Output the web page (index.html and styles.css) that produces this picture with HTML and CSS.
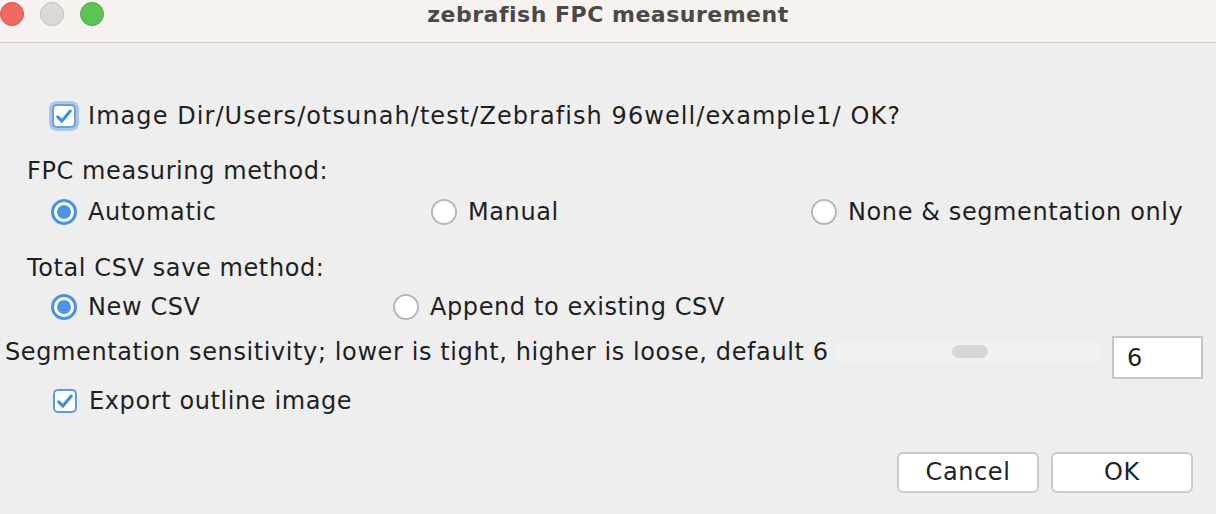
FILE: index.html
```html
<!DOCTYPE html>
<html>
<head>
<meta charset="utf-8">
<link rel="stylesheet" href="styles.css">
</head>
<body>
<div class="window">
  <div class="titlebar">
    <div class="lights">
      <span class="light red"></span>
      <span class="light gray"></span>
      <span class="light green"></span>
    </div>
    <div class="title">zebrafish FPC measurement</div>
  </div>
  <div class="content">
    <div class="row row-check1">
      <span class="checkbox focus"><svg viewBox="0 0 24 24" width="21" height="21"><path d="M4.5 12.5 L9.5 17.5 L19.5 5.5" fill="none" stroke="#3d8fe6" stroke-width="3.8" stroke-linecap="round" stroke-linejoin="round"/></svg></span>
      <span class="label wide">Image Dir/Users/otsunah/test/Zebrafish 96well/example1/ OK?</span>
    </div>
    <div class="row heading h1">FPC measuring method:</div>
    <div class="row radios fpc">
      <div class="opt"><span class="radio on"></span><span class="label">Automatic</span></div>
      <div class="opt"><span class="radio"></span><span class="label">Manual</span></div>
      <div class="opt"><span class="radio"></span><span class="label">None &amp; segmentation only</span></div>
    </div>
    <div class="row heading h2">Total CSV save method:</div>
    <div class="row radios csv">
      <div class="opt"><span class="radio on"></span><span class="label">New CSV</span></div>
      <div class="opt"><span class="radio"></span><span class="label">Append to existing CSV</span></div>
    </div>
    <div class="row seg">
      <span class="seg-label">Segmentation sensitivity; lower is tight, higher is loose, default 6</span>
      <div class="slider"><span class="knob"></span></div>
      <div class="field">6</div>
    </div>
    <div class="row row-check2">
      <span class="checkbox"><svg viewBox="0 0 24 24" width="21" height="21"><path d="M4.5 12.5 L9.5 17.5 L19.5 5.5" fill="none" stroke="#3d8fe6" stroke-width="3.8" stroke-linecap="round" stroke-linejoin="round"/></svg></span>
      <span class="label">Export outline image</span>
    </div>
    <div class="buttons">
      <div class="btn">Cancel</div>
      <div class="btn">OK</div>
    </div>
  </div>
</div>
</body>
</html>
```
FILE: styles.css
```css
html, body {
  margin: 0;
  padding: 0;
}
body {
  width: 1216px;
  height: 514px;
  overflow: hidden;
  background: #eeeeee;
  font-family: "DejaVu Sans", "Liberation Sans", sans-serif;
  color: #1f1f1f;
}
.window {
  width: 1216px;
  height: 514px;
  background: #eeeeee;
}
.titlebar {
  height: 42px;
  background: #f6f2f0;
  border-bottom: 1px solid #d2cfcd;
  position: relative;
  display: flex;
  align-items: center;
  justify-content: center;
}
.lights {
  position: absolute;
  left: 0;
  top: 2px;
  display: flex;
  gap: 16px;
}
.light {
  width: 24px;
  height: 24px;
  border-radius: 50%;
  box-sizing: border-box;
}
.red { background: #ee6a5f; border: 1px solid #d6544a; }
.gray { background: #dcd8d6; border: 1px solid #c4c0be; }
.green { background: #5cc454; border: 1px solid #4aa942; }
.title {
  font-family: "DejaVu Sans", sans-serif;
  font-weight: bold;
  font-size: 22px;
  letter-spacing: 0.5px;
  color: #4b4848;
  margin-top: -14px;
}
.content {
  position: relative;
  padding-top: 55px;
  font-size: 24px;
  letter-spacing: 0.6px;
}
.row {
  display: flex;
  align-items: center;
  height: 36px;
}
.row-check1 { padding-left: 52px; }
.wide { letter-spacing: 1.07px; }
.checkbox {
  width: 24px;
  height: 24px;
  box-sizing: border-box;
  border: 2px solid #5b9be6;
  border-radius: 5px;
  background: #ffffff;
  display: inline-flex;
  align-items: center;
  justify-content: center;
  margin-right: 12px;
  flex: none;
}
.checkbox.focus {
  box-shadow: 0 0 0 3px #a9c7ea;
  border-color: #6c9fdb;
}
.heading { padding-left: 27px; }
.h1 { margin-top: 19px; }
.radios { display: grid; padding-left: 51px; margin-top: 5px; }
.fpc { grid-template-columns: 380px 380px 380px; }
.h2 { margin-top: 20px; }
.csv { grid-template-columns: 342px 342px; margin-top: 3px; }
.opt { display: flex; align-items: center; }
.radio {
  width: 26px;
  height: 26px;
  box-sizing: border-box;
  border-radius: 50%;
  border: 2px solid #b8b8b8;
  background: #ffffff;
  margin-right: 11px;
  flex: none;
  position: relative;
}
.radio.on {
  border: 3px solid #4a94e6;
}
.radio.on::after {
  content: "";
  position: absolute;
  left: 3px;
  top: 3px;
  width: 14px;
  height: 14px;
  border-radius: 50%;
  background: #4a94e6;
}
.seg {
  margin-top: 11px;
  height: 44px;
  padding-left: 5px;
  align-items: flex-start;
}
.seg-label {
  line-height: 32px;
  width: 831px;
  white-space: nowrap;
}
.slider {
  width: 264px;
  height: 20px;
  margin-top: 6px;
  background: #f1f1f1;
  border-radius: 3px;
  position: relative;
  flex: none;
}
.knob {
  position: absolute;
  left: 116px;
  top: 3px;
  width: 36px;
  height: 13px;
  border-radius: 7px;
  background: #d6d6d6;
}
.field {
  margin-left: 12px;
  width: 91px;
  height: 43px;
  box-sizing: border-box;
  background: #ffffff;
  border: 2px solid #c6c6c6;
  padding-left: 13px;
  line-height: 40px;
  flex: none;
}
.row-check2 { padding-left: 53px; margin-top: 3px; }
.buttons {
  display: flex;
  justify-content: flex-end;
  gap: 12px;
  padding-right: 23px;
  margin-top: 33px;
}
.btn {
  width: 142px;
  height: 41px;
  box-sizing: border-box;
  background: #ffffff;
  border: 2px solid #cacaca;
  border-radius: 6px;
  text-align: center;
  line-height: 37px;
  color: #222;
}
```
